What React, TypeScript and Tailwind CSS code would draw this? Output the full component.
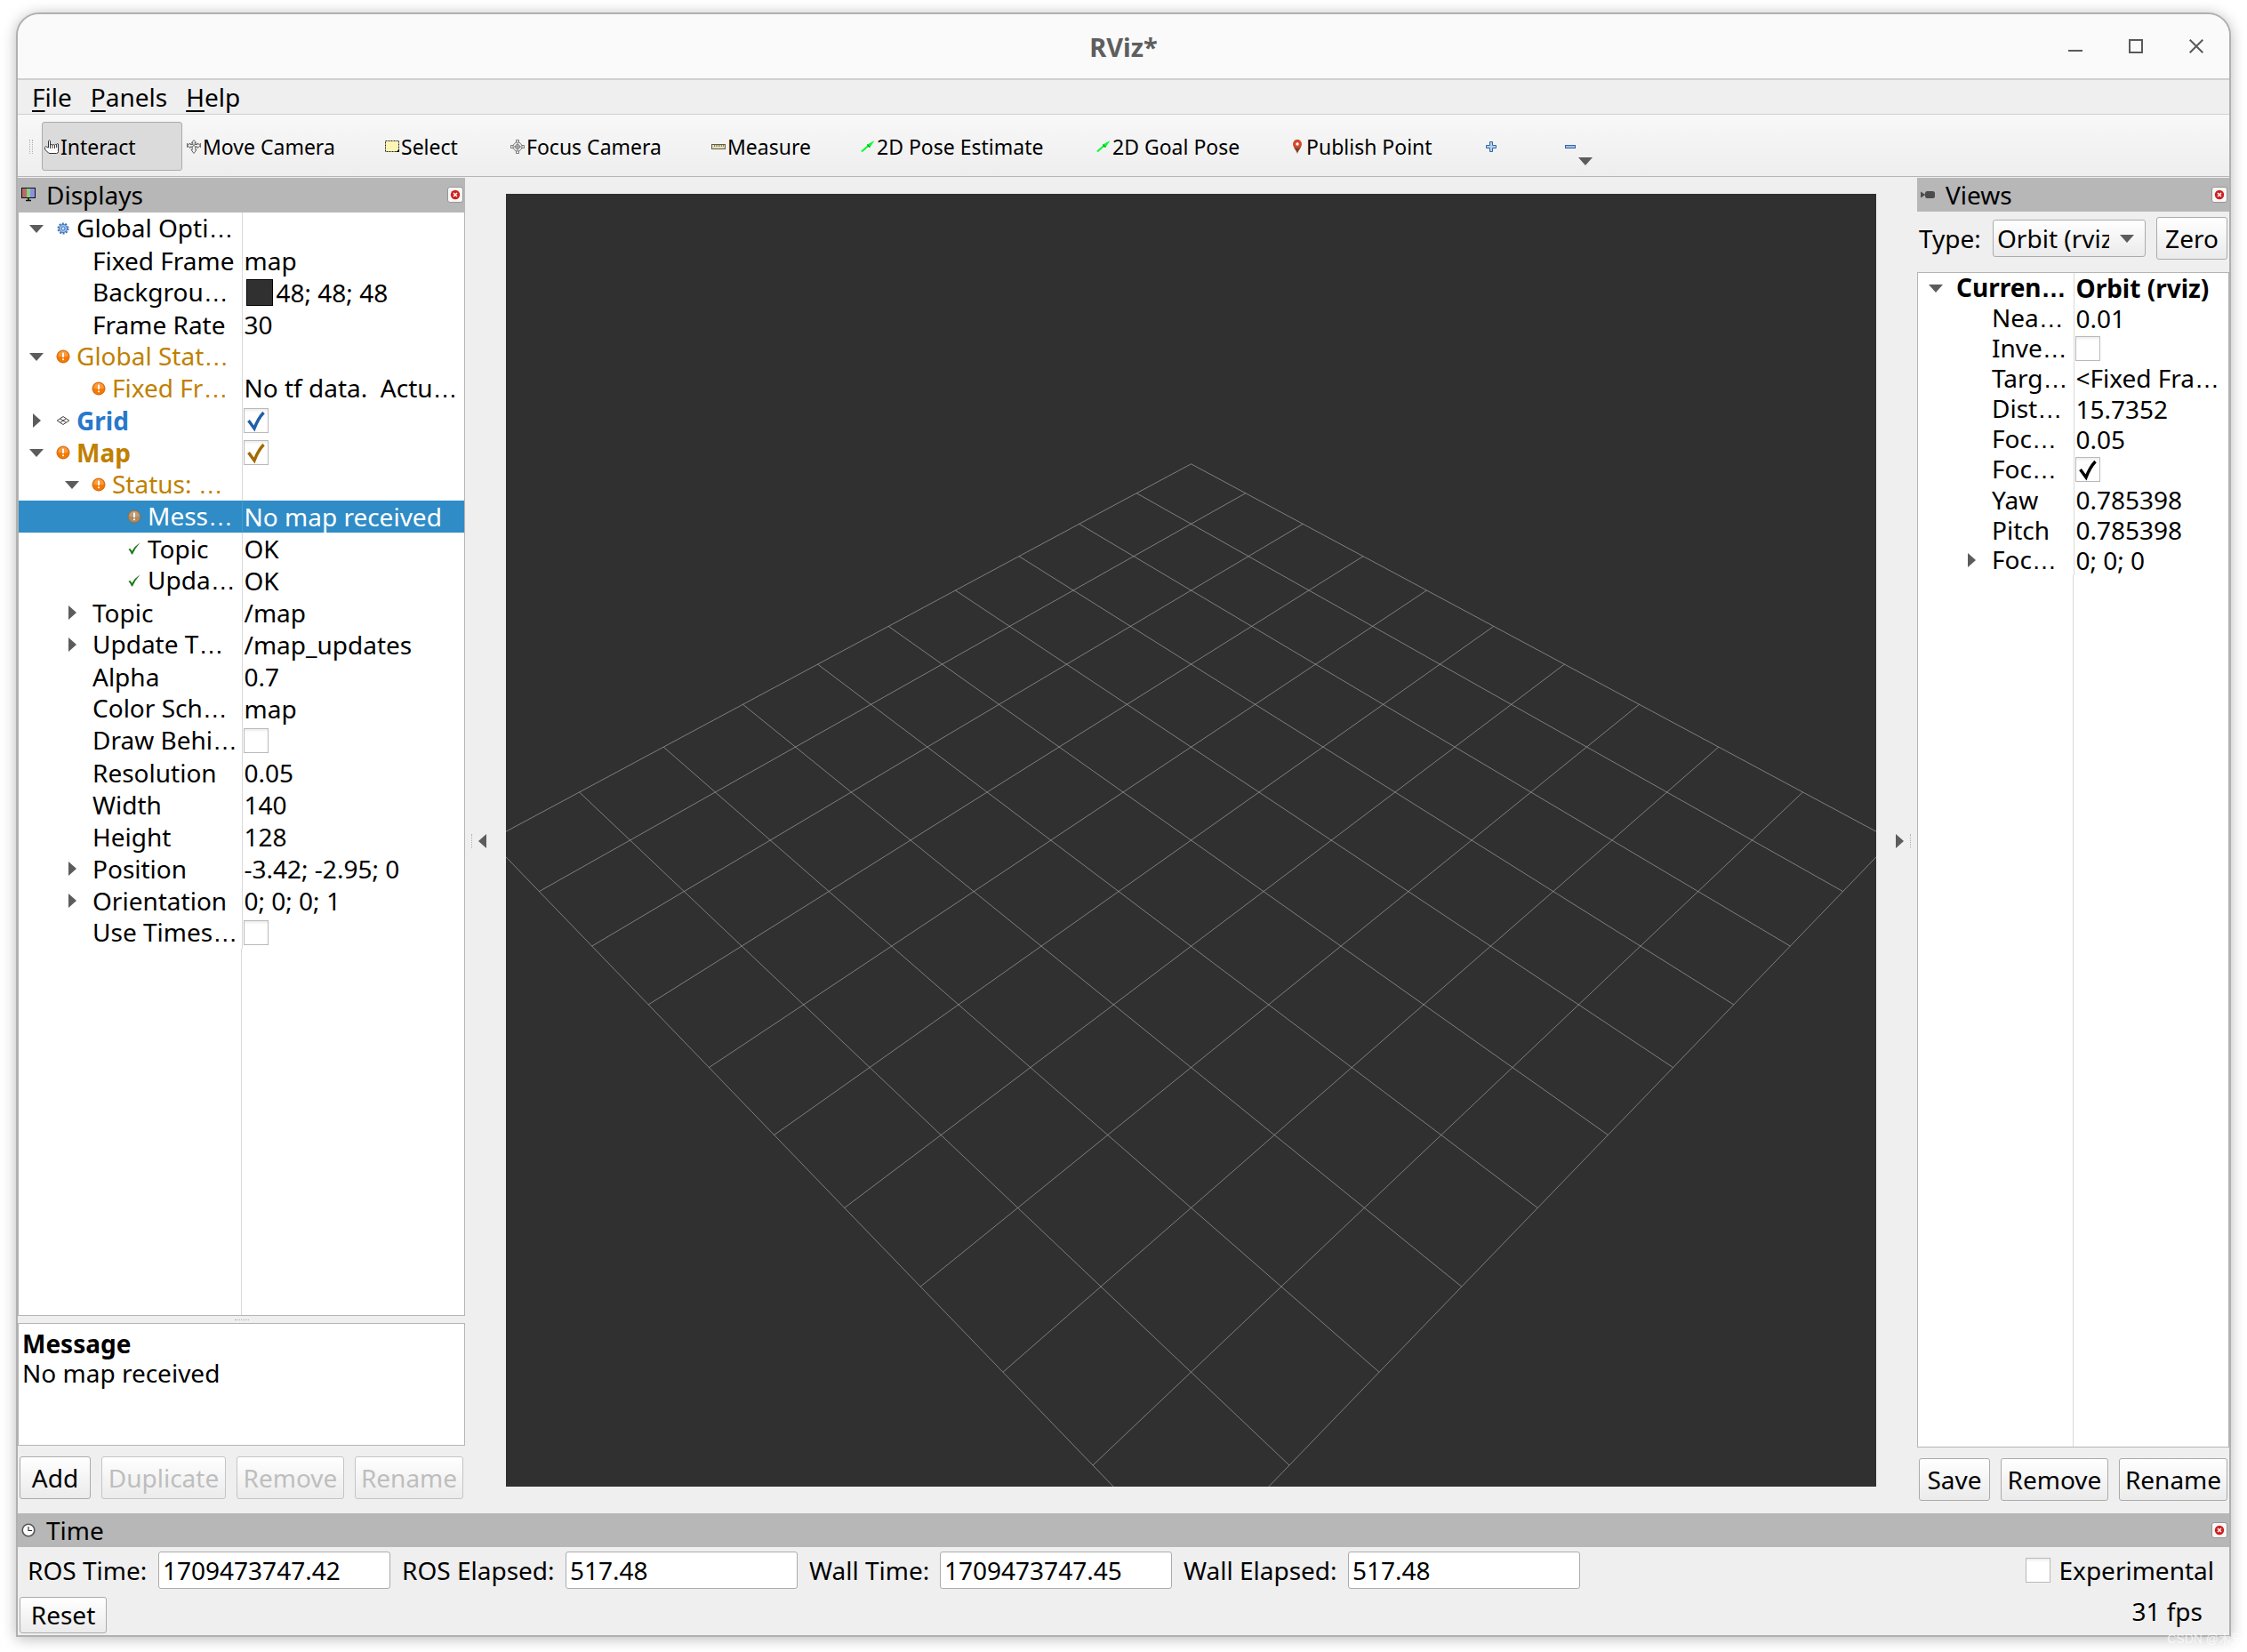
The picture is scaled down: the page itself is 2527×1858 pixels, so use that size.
import type { ReactNode } from 'react'
import clsx from 'clsx'

type Tone = 'normal' | 'warn' | 'link'

type Row = {
  name: string
  value?: string
  depth: number
  arrow?: 'open' | 'closed'
  icon?: 'gear' | 'warn' | 'grid' | 'ok'
  tone?: Tone
  bold?: boolean
  boldValue?: boolean
  swatch?: boolean
  checked?: boolean
  selected?: boolean
}

const DISPLAY_ROWS: Row[] = [
  { name: 'Global Opti…', depth: 0, arrow: 'open', icon: 'gear' },
  { name: 'Fixed Frame', value: 'map', depth: 1 },
  { name: 'Backgrou…', value: '48; 48; 48', depth: 1, swatch: true },
  { name: 'Frame Rate', value: '30', depth: 1 },
  { name: 'Global Stat…', depth: 0, arrow: 'open', icon: 'warn', tone: 'warn' },
  { name: 'Fixed Fr…', value: 'No tf data.  Actu…', depth: 1, icon: 'warn', tone: 'warn' },
  { name: 'Grid', depth: 0, arrow: 'closed', icon: 'grid', tone: 'link', bold: true, checked: true },
  { name: 'Map', depth: 0, arrow: 'open', icon: 'warn', tone: 'warn', bold: true, checked: true },
  { name: 'Status: …', depth: 1, arrow: 'open', icon: 'warn', tone: 'warn' },
  { name: 'Mess…', value: 'No map received', depth: 2, icon: 'warn', selected: true },
  { name: 'Topic', value: 'OK', depth: 2, icon: 'ok' },
  { name: 'Upda…', value: 'OK', depth: 2, icon: 'ok' },
  { name: 'Topic', value: '/map', depth: 1, arrow: 'closed' },
  { name: 'Update T…', value: '/map_updates', depth: 1, arrow: 'closed' },
  { name: 'Alpha', value: '0.7', depth: 1 },
  { name: 'Color Sch…', value: 'map', depth: 1 },
  { name: 'Draw Behi…', depth: 1, checked: false },
  { name: 'Resolution', value: '0.05', depth: 1 },
  { name: 'Width', value: '140', depth: 1 },
  { name: 'Height', value: '128', depth: 1 },
  { name: 'Position', value: '-3.42; -2.95; 0', depth: 1, arrow: 'closed' },
  { name: 'Orientation', value: '0; 0; 0; 1', depth: 1, arrow: 'closed' },
  { name: 'Use Times…', depth: 1, checked: false },
]

const VIEW_ROWS: Row[] = [
  { name: 'Curren…', value: 'Orbit (rviz)', depth: 0, arrow: 'open', bold: true, boldValue: true },
  { name: 'Nea…', value: '0.01', depth: 1 },
  { name: 'Inve…', depth: 1, checked: false },
  { name: 'Targ…', value: '<Fixed Fra…', depth: 1 },
  { name: 'Dist…', value: '15.7352', depth: 1 },
  { name: 'Foc…', value: '0.05', depth: 1 },
  { name: 'Foc…', depth: 1, checked: true },
  { name: 'Yaw', value: '0.785398', depth: 1 },
  { name: 'Pitch', value: '0.785398', depth: 1 },
  { name: 'Foc…', value: '0; 0; 0', depth: 1, arrow: 'closed' },
]

const TIMES = [
  { id: 'ros-time', label: 'ROS Time:', value: '1709473747.42', width: 'w-[134px]' },
  { id: 'ros-elapsed', label: 'ROS Elapsed:', value: '517.48', width: 'w-[171px]' },
  { id: 'wall-time', label: 'Wall Time:', value: '1709473747.45', width: 'w-[134px]' },
  { id: 'wall-elapsed', label: 'Wall Elapsed:', value: '517.48', width: 'w-[172px]' },
]

const INDENT = ['pl-0', 'pl-[40px]', 'pl-[80px]']

const TONES: Record<Tone, string> = {
  normal: 'text-black',
  warn: 'text-[#c08000]',
  link: 'text-[#2878cc]',
}

const CHECK_TONES: Record<Tone, string> = {
  normal: 'text-black',
  warn: 'text-[#a06a00]',
  link: 'text-[#2060a8]',
}

/* ---------- icons ---------- */

function Icon({ children, className }: { children: ReactNode; className?: string }) {
  return (
    <svg viewBox="0 0 16 16" aria-hidden="true" className={clsx('h-4 w-4 shrink-0', className)} fill="none">
      {children}
    </svg>
  )
}

const HandIcon = () => (
  <Icon>
    <path
      d="M4.5 9V1.5Q5.5 0 6.5 1.5V6Q8 4.8 9 6.2Q10.5 5 11.5 6.2Q12.8 4.8 13.6 5.6Q14 3.8 15.5 5V13.5Q15.5 15.5 13.5 15.5H6Q4.5 15.5 3.5 14L.6 11V8.5Q1.5 6.5 2.8 8.5Z"
      fill="#fff"
      stroke="#333"
    />
    <path d="M6.5 6v4M9 6.2V10M11.5 6.2V10M13.6 5.6V9" stroke="#333" />
  </Icon>
)

const MoveIcon = () => (
  <Icon>
    <path
      d="M8 .5 10.5 3.5H9.2V5.5H12V4L15.5 6.5 12 9.5V8H9.8V11.5H11L8 15.5 5 11.5H6.2V8H4V9.5L.5 6.5 4 4V5.5H6.8V3.5H5.5Z"
      fill="#f2f2f2"
      stroke="#555"
      strokeWidth="0.9"
    />
    <path d="M5.5 8.5 10.5 4.5M5.5 4.5 10.5 8.5" stroke="#666" strokeWidth="0.9" />
    <path d="M.7 4v5M15.3 4v5" stroke="#555" />
  </Icon>
)

const SelectIcon = () => (
  <Icon>
    <rect x="0.5" y="1.5" width="15" height="12" fill="#fdf6b2" stroke="#222" strokeDasharray="2 1" />
    <path d="M16 10.5V14H12.5Z" fill="#000" />
  </Icon>
)

const FocusIcon = () => (
  <Icon>
    <circle cx="8" cy="8" r="5" stroke="#777" />
    <circle cx="8" cy="8" r="2.5" stroke="#777" />
    <path d="M6.5 3V.5h3V3M6.5 13v2.5h3V13M3 6.5H.5v3H3M13 6.5h2.5v3H13" stroke="#777" />
    <path d="M8 4v8M4 8h8" stroke="#777" />
  </Icon>
)

const MeasureIcon = () => (
  <Icon>
    <rect x="0.5" y="5.5" width="15" height="5" fill="#e9e0a8" stroke="#5c5c5c" />
    <path d="M3.5 6v2M5.5 6v2M7.5 6v2M9.5 6v2M11.5 6v2M13.5 6v2" stroke="#6c6a55" strokeWidth="0.8" />
  </Icon>
)

const PoseIcon = () => (
  <Icon>
    <path d="M1 13.5 9 6.5" stroke="#00ff2a" strokeWidth="2" />
    <path d="M15.5 1 7.5 5.5 10.5 8.5Z" fill="#00ff2a" />
    <path d="M7.5 5.5 10.5 8.5 8.5 7.8Z" fill="#0c8a1c" stroke="#0c8a1c" strokeWidth="0.7" />
  </Icon>
)

const PinIcon = () => (
  <Icon>
    <path d="M8 16C7 12 3.3 9.5 3.3 5A4.7 5 0 0 1 12.7 5C12.7 9.5 9 12 8 16Z" fill="#75442a" />
    <path d="M3.3 5A4.7 5 0 0 1 12.7 5Q12.5 7.5 11 9.5H5Q3.4 7.5 3.3 5Z" fill="#d9472b" />
    <circle cx="8" cy="5" r="1.7" fill="#fff" />
  </Icon>
)

const PlusIcon = () => (
  <Icon>
    <path d="M6.5 2.5h3v4h4v3h-4v4h-3v-4h-4v-3h4Z" fill="#b4d2ee" stroke="#3465a4" />
  </Icon>
)

const MinusIcon = () => (
  <Icon>
    <rect x="1.5" y="6.5" width="11" height="3" fill="#9fc2e6" stroke="#3465a4" />
  </Icon>
)

const MonitorIcon = () => (
  <Icon>
    <rect x="1" y="1" width="5" height="11" fill="#b86a6c" />
    <rect x="6" y="1" width="4" height="11" fill="#86d088" />
    <rect x="10" y="1" width="5" height="11" fill="#8f8fe0" />
    <rect x="0.5" y="0.5" width="15" height="11" stroke="#111" />
    <path d="M8 12v2.5M5 14.5h6" stroke="#111" strokeWidth="1.6" />
  </Icon>
)

const CameraIcon = () => (
  <Icon>
    <rect x="5" y="4" width="11" height="8" rx="2.5" fill="#4c4c4c" />
    <path d="M0 4.5 5.5 8 0 11.5Z" fill="#4c4c4c" />
  </Icon>
)

const ClockIcon = () => (
  <Icon>
    <circle cx="8" cy="8" r="6.8" fill="#fff" stroke="#555" strokeWidth="1.6" />
    <path d="M8 4v4.5h4" stroke="#222" strokeWidth="1.1" />
  </Icon>
)

const GearIcon = () => (
  <Icon>
    <circle cx="8" cy="8" r="5.6" stroke="#3b6fb5" strokeWidth="1.8" strokeDasharray="2 1.5" />
    <circle cx="8" cy="8" r="4.6" fill="#9bbfe6" stroke="#3b6fb5" strokeWidth="0.9" />
    <circle cx="8" cy="8" r="2" fill="#dbe9f7" stroke="#3b6fb5" strokeWidth="0.9" />
  </Icon>
)

const WarnIcon = ({ dim }: { dim?: boolean }) => (
  <Icon>
    <circle cx="8" cy="8" r="7" fill={dim ? '#b08a60' : '#f57900'} stroke={dim ? '#8c6c4c' : '#c8660c'} />
    <path d="M2.2 7.5A5.8 5.8 0 0 1 13.8 7.5Q8 9.5 2.2 7.5Z" fill={dim ? '#bf9d78' : '#fb9b3c'} />
    <rect x="7" y="3.5" width="2" height="5.5" rx="0.8" fill="#fff" />
    <rect x="7" y="10.2" width="2" height="2" rx="0.8" fill="#fff" />
  </Icon>
)

const GridIcon = () => (
  <Icon>
    <path d="M8 3.5 14.8 8 8 12.5 1.2 8ZM4.6 5.8l6.8 4.5M11.4 5.8 4.6 10.3" stroke="#444" />
  </Icon>
)

const OkIcon = () => (
  <Icon>
    <path d="M1.5 9 3.2 7.8 5.5 10.8Q8.5 5 14.5 1.5 9 7.5 6 14.5H5Q4 11 1.5 9Z" fill="#1f7a1f" />
  </Icon>
)

const ROW_ICONS = { gear: GearIcon, warn: WarnIcon, grid: GridIcon, ok: OkIcon }

function Triangle({ dir, className }: { dir: 'down' | 'right' | 'left'; className?: string }) {
  const shape = { down: 'M0 4h16L8 13Z', right: 'M4 0v16l9-8Z', left: 'M12 0v16L3 8Z' }[dir]
  return (
    <Icon className={className}>
      <path d={shape} fill="#5c5c5c" />
    </Icon>
  )
}

/* ---------- shared controls ---------- */

function CheckBox({ checked, label, tone = 'normal', id }: { checked?: boolean; label?: string; tone?: Tone; id?: string }) {
  return (
    <span className="grid h-7 w-7 shrink-0">
      <input
        id={id}
        type="checkbox"
        defaultChecked={checked}
        aria-label={label}
        className="peer col-start-1 row-start-1 h-7 w-7 appearance-none border border-[#b9b9b9] bg-white bg-linear-to-b from-[#ececec] to-white to-15%"
      />
      <svg
        viewBox="0 0 28 28"
        fill="none"
        aria-hidden="true"
        className={clsx('pointer-events-none invisible col-start-1 row-start-1 peer-checked:visible', CHECK_TONES[tone])}
      >
        <path d="M5.5 14 12 23Q16 12 22.5 5" stroke="currentColor" strokeWidth="3.4" />
      </svg>
    </span>
  )
}

function PushButton({ children, className, disabled }: { children: ReactNode; className?: string; disabled?: boolean }) {
  return (
    <button
      type="button"
      disabled={disabled}
      className={clsx(
        'flex items-center justify-center rounded-[3px] border border-[#ababab] bg-linear-to-b from-white to-[#ebebeb] disabled:border-[#c4c4c4] disabled:text-[#bebebe]',
        className,
      )}
    >
      {children}
    </button>
  )
}

function DockHeader({ icon, title, className }: { icon: ReactNode; title: string; className: string }) {
  return (
    <div className={clsx('flex shrink-0 items-center bg-[#b7b7b7] pr-[2px] pb-px pl-1', className)}>
      {icon}
      <h2 className="ml-3 flex-1">{title}</h2>
      <button
        type="button"
        aria-label={`Close ${title}`}
        className="flex h-[18px] w-[18px] items-center justify-center rounded-[3px] border border-[#979797] bg-[#f7f7f7]"
      >
        <svg viewBox="0 0 12 12" className="h-3 w-3" fill="none" aria-hidden="true">
          <circle cx="6" cy="6" r="5.2" fill="#cf1f1f" />
          <path d="M4 4l4 4M8 4 4 8" stroke="#fff" strokeWidth="1.5" />
        </svg>
      </button>
    </div>
  )
}

// Cut-off texts end in a wide, evenly spaced ellipsis
function CellText({ text }: { text: string }) {
  if (!text.endsWith('…')) return <>{text}</>
  return (
    <>
      {text.slice(0, -1)}
      <span className="font-['Liberation_Sans',sans-serif]">…</span>
    </>
  )
}

function PropertyTree({ rows, label, nameWidth, rowHeight, className }: {
  rows: Row[]
  label: string
  nameWidth: string
  rowHeight: string
  className?: string
}) {
  return (
    <div className={clsx('flex flex-1 flex-col border-[#b5b5b5] bg-white', className)}>
      <table aria-label={label} className="w-full table-fixed border-collapse">
        <colgroup>
          <col className={nameWidth} />
          <col />
        </colgroup>
        <tbody>
          {rows.map((row, i) => {
            const RowIcon = row.icon && ROW_ICONS[row.icon]
            const tone = row.tone ?? 'normal'
            const hasCheck = row.checked !== undefined
            return (
              <tr key={i} className={clsx(row.selected && 'bg-[#308cc6] text-white')}>
                <td className={clsx('border-r p-0', row.selected ? 'border-[#4699cd]' : 'border-[#d9d9d9]')}>
                  <div className={clsx('flex items-center whitespace-pre', rowHeight, INDENT[row.depth])}>
                    <span className="flex w-10 shrink-0 justify-center">
                      {row.arrow && <Triangle dir={row.arrow === 'open' ? 'down' : 'right'} />}
                    </span>
                    {RowIcon && <span className="mr-[7px] ml-[2px]"><RowIcon dim={row.selected} /></span>}
                    <span className={clsx(!RowIcon && 'ml-[3px]', row.bold && 'font-bold', !row.selected && TONES[tone])}>
                      <CellText text={row.name} />
                    </span>
                  </div>
                </td>
                <td className="p-0">
                  <div
                    className={clsx(
                      'flex items-center whitespace-pre',
                      hasCheck ? 'pl-px' : 'pl-[2px]',
                      rowHeight,
                      row.boldValue && 'font-bold',
                    )}
                  >
                    {hasCheck && <CheckBox checked={row.checked} label={row.name} tone={tone} />}
                    {row.swatch && <span className="mr-1 ml-[2px] h-[30px] w-[30px] border border-black bg-[#303030]" />}
                    {row.value && <span><CellText text={row.value} /></span>}
                  </div>
                </td>
              </tr>
            )
          })}
        </tbody>
      </table>
      <div className={clsx('flex-1 border-r border-[#d9d9d9]', nameWidth)} />
    </div>
  )
}

function ToolButton({ icon, label, width, active, name }: {
  icon: ReactNode
  label?: string
  width: string
  active?: boolean
  name?: string
}) {
  return (
    <button
      type="button"
      aria-label={name}
      className={clsx(
        'flex h-[55px] shrink-0 items-center gap-[2px] rounded-[3px] border pl-[2px] text-[23px] leading-8 whitespace-nowrap',
        active ? 'mr-[2px] border-[#ababab] bg-[#dbdbdb]' : 'border-transparent',
        width,
      )}
    >
      {icon}
      {label}
    </button>
  )
}

/* ---------- 3D view ---------- */

const VIEW_W = 1541
const VIEW_H = 1454
const CELLS = 10

// Orbit camera: distance, yaw and pitch as in the Views panel, 45 degree field of view
function project(x: number, y: number) {
  const distance = 15.7352
  const angle = 0.785398
  const focal = VIEW_H / 2 / Math.tan(Math.PI / 8)
  const away = -(x + y) * Math.cos(angle)
  const side = (y - x) * Math.sin(angle)
  const depth = distance + away * Math.cos(angle)
  return [VIEW_W / 2 + (focal * side) / depth, VIEW_H / 2 - (focal * away * Math.sin(angle)) / depth]
}

function gridPath() {
  const half = CELLS / 2
  let d = ''
  for (let i = -half; i <= half; i++) {
    const ends = [
      [project(i, -half), project(i, half)],
      [project(-half, i), project(half, i)],
    ]
    ends.forEach(([a, b]) => {
      d += `M${a[0].toFixed(1)} ${a[1].toFixed(1)}L${b[0].toFixed(1)} ${b[1].toFixed(1)}`
    })
  }
  return d
}

function Viewport() {
  return (
    <main className="mt-[18px] mb-[30px] flex min-w-0 flex-1 bg-[#303030]">
      <svg
        viewBox={`0 0 ${VIEW_W} ${VIEW_H}`}
        preserveAspectRatio="xMidYMid slice"
        className="min-h-0 w-full"
        role="img"
        aria-label="Ground grid"
      >
        <path d={gridPath()} stroke="#a0a0a4" strokeOpacity="0.7" strokeWidth="1" fill="none" />
      </svg>
    </main>
  )
}

function Grip({ vertical }: { vertical?: boolean }) {
  return (
    <span
      className={clsx('border-dotted border-[#b0b0b0]', vertical ? 'h-4 w-0 border-l' : 'h-0 w-4 border-t')}
    />
  )
}

/* ---------- window ---------- */

export default function App() {
  return (
    <div className="relative flex min-h-screen flex-col bg-white pt-[14px] pr-[18px] pb-[18px] pl-[18px] font-['Noto_Sans',sans-serif] text-[28px] leading-[34px] text-black">
      <div className="flex flex-1 flex-col overflow-hidden rounded-t-[26px] border-2 border-[#b0b0b0] bg-[#efefef] shadow-[0_2px_16px_rgba(0,0,0,0.28)]">
        {/* Title bar */}
        <header className="grid h-[74px] shrink-0 grid-cols-[1fr_auto_1fr] items-center border-b-2 border-[#d0d0d0] bg-[#fafafa]">
          <h1 className="col-start-2 pt-[2px] text-[29px] font-bold text-[#5e5e5e]">RViz*</h1>
          <div className="flex justify-end gap-[52px] pr-[29px] text-[#5a5a5a]">
            <button type="button" aria-label="Minimize">
              <Icon><path d="M0 13h16" stroke="currentColor" strokeWidth="2" /></Icon>
            </button>
            <button type="button" aria-label="Maximize">
              <Icon><rect x="1" y="1" width="14" height="14" stroke="currentColor" strokeWidth="2" /></Icon>
            </button>
            <button type="button" aria-label="Close">
              <Icon><path d="M.7.7l14.6 14.6M15.3.7.7 15.3" stroke="currentColor" strokeWidth="2" /></Icon>
            </button>
          </div>
        </header>

        {/* Menu bar */}
        <nav className="flex h-[39px] shrink-0 items-center gap-[21px] border-b border-[#d0d0d0] pl-4">
          {['File', 'Panels', 'Help'].map((item) => (
            <button key={item} type="button">
              <span className="underline decoration-2 underline-offset-4">{item[0]}</span>
              {item.slice(1)}
            </button>
          ))}
        </nav>

        {/* Toolbar */}
        <div className="flex h-[70px] shrink-0 items-center border-b border-[#b5b5b5] bg-linear-to-b from-[#f8f8f8] to-[#eeeeee] pt-[2px] pl-[13px]">
          <span className="mr-[10px] flex gap-[2px]">
            <Grip vertical />
            <Grip vertical />
          </span>
          <ToolButton active icon={<HandIcon />} label="Interact" width="w-[158px]" />
          <ToolButton icon={<MoveIcon />} label="Move Camera" width="w-[223px]" />
          <ToolButton icon={<SelectIcon />} label="Select" width="w-[141px]" />
          <ToolButton icon={<FocusIcon />} label="Focus Camera" width="w-[226px]" />
          <ToolButton icon={<MeasureIcon />} label="Measure" width="w-[168px]" />
          <ToolButton icon={<PoseIcon />} label="2D Pose Estimate" width="w-[265px]" />
          <ToolButton icon={<PoseIcon />} label="2D Goal Pose" width="w-[218px]" />
          <ToolButton icon={<PinIcon />} label="Publish Point" width="w-[218px]" />
          <ToolButton icon={<PlusIcon />} name="Add tool" width="w-[93px]" />
          <button type="button" aria-label="Remove tool" className="flex h-[55px] items-center">
            <MinusIcon />
            <Triangle dir="down" className="mt-8" />
          </button>
        </div>

        <div className="flex flex-1 pt-px">
          {/* Displays */}
          <section className="flex w-[503px] shrink-0 flex-col">
            <DockHeader icon={<MonitorIcon />} title="Displays" className="h-[39px]" />
            <PropertyTree
              rows={DISPLAY_ROWS}
              label="Displays"
              nameWidth="w-[251px]"
              rowHeight="h-9"
              className="border-x border-b"
            />
            <div className="flex h-2 shrink-0 items-center justify-center">
              <Grip />
            </div>
            <div className="h-[138px] shrink-0 border border-[#b5b5b5] bg-white px-1 pt-[6px] leading-[33px]">
              <p className="font-bold">Message</p>
              <p>No map received</p>
            </div>
            <div className="mt-3 mb-4 flex shrink-0 gap-3 px-[2px]">
              <PushButton className="h-12 w-20">Add</PushButton>
              <PushButton disabled className="h-12 w-[140px]">Duplicate</PushButton>
              <PushButton disabled className="h-12 w-[121px]">Remove</PushButton>
              <PushButton disabled className="h-12 flex-1">Rename</PushButton>
            </div>
          </section>

          <div className="flex w-[46px] shrink-0 items-center gap-1 pb-[10px] pl-[7px]">
            <Grip vertical />
            <button type="button" aria-label="Collapse left panel">
              <Triangle dir="left" />
            </button>
          </div>

          <Viewport />

          <div className="flex w-[46px] shrink-0 items-center justify-end gap-1 pr-[7px] pb-[10px]">
            <button type="button" aria-label="Collapse right panel">
              <Triangle dir="right" />
            </button>
            <Grip vertical />
          </div>

          {/* Views */}
          <section className="flex w-[351px] shrink-0 flex-col">
            <DockHeader icon={<CameraIcon />} title="Views" className="h-[38px]" />
            <div className="flex shrink-0 items-center gap-3 pt-[6px] pr-[2px] pb-[14px] pl-[2px]">
              <label htmlFor="view-type" className="w-[71px]">Type:</label>
              <div className="grid flex-1 items-center">
                <select
                  id="view-type"
                  className="col-start-1 row-start-1 h-[42px] w-full appearance-none overflow-hidden rounded-[3px] border border-[#ababab] bg-linear-to-b from-white to-[#ebebeb] pr-10 pl-1 leading-[38px]"
                >
                  <option>Orbit (rviz)</option>
                </select>
                <Triangle dir="down" className="pointer-events-none col-start-1 row-start-1 mr-[13px] justify-self-end" />
              </div>
              <PushButton className="h-12 w-20">Zero</PushButton>
            </div>
            <PropertyTree
              rows={VIEW_ROWS}
              label="Current view"
              nameWidth="w-[175px]"
              rowHeight="h-[34px]"
              className="border"
            />
            <div className="mt-3 mb-[14px] flex shrink-0 gap-3 px-[2px]">
              <PushButton className="h-12 w-20">Save</PushButton>
              <PushButton className="h-12 w-[121px]">Remove</PushButton>
              <PushButton className="h-12 flex-1">Rename</PushButton>
            </div>
          </section>
        </div>

        {/* Time */}
        <section className="flex shrink-0 flex-col">
          <DockHeader icon={<ClockIcon />} title="Time" className="h-[38px]" />
          <div className="mt-[5px] flex items-center gap-[13px] pr-[17px] pl-[11px]">
            {TIMES.map(({ id, label, value, width }) => (
              <div key={id} className="flex items-center gap-[13px]">
                <label htmlFor={id} className={clsx('whitespace-nowrap', width)}>{label}</label>
                <input
                  id={id}
                  type="text"
                  readOnly
                  defaultValue={value}
                  className="h-[42px] w-[261px] rounded-[3px] border border-[#ababab] bg-white px-1"
                />
              </div>
            ))}
            <div className="ml-auto flex items-center gap-[10px]">
              <CheckBox id="experimental" />
              <label htmlFor="experimental">Experimental</label>
            </div>
          </div>
          <div className="mt-2 mb-[2px] flex items-center justify-between pr-[30px] pl-[2px]">
            <PushButton className="h-[41px] w-[98px]">Reset</PushButton>
            <span className="pb-2">31 fps</span>
          </div>
        </section>
      </div>
      <span className="absolute right-[4px] bottom-[6px] font-['Liberation_Sans','Noto_Sans_CJK_SC',sans-serif] text-[14px] leading-5 text-white/70">
        CSDN @木兄
      </span>
    </div>
  )
}
